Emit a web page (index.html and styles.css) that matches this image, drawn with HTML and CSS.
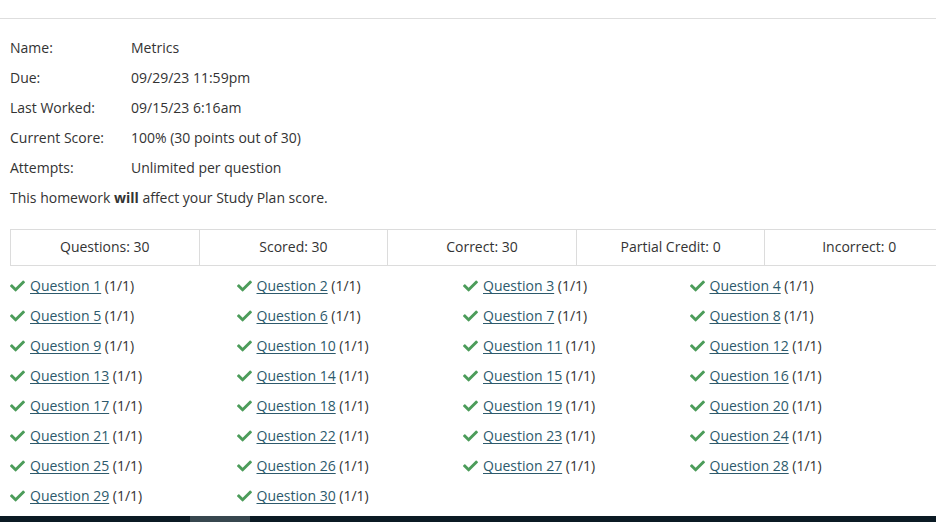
FILE: index.html
```html
<!DOCTYPE html>
<html>
<head>
<meta charset="utf-8">
<link rel="stylesheet" href="styles.css">
</head>
<body>
<div class="topbar"></div>
<main class="content">
  <dl class="info">
    <div class="info-row"><dt>Name:</dt><dd>Metrics</dd></div>
    <div class="info-row"><dt>Due:</dt><dd>09/29/23 11:59pm</dd></div>
    <div class="info-row"><dt>Last Worked:</dt><dd>09/15/23 6:16am</dd></div>
    <div class="info-row"><dt>Current Score:</dt><dd>100% (30 points out of 30)</dd></div>
    <div class="info-row"><dt>Attempts:</dt><dd>Unlimited per question</dd></div>
  </dl>
  <p class="note">This homework <b>will</b> affect your Study Plan score.</p>
  <div class="summary">
    <div class="cell">Questions: 30</div>
    <div class="cell">Scored: 30</div>
    <div class="cell">Correct: 30</div>
    <div class="cell">Partial Credit: 0</div>
    <div class="cell">Incorrect: 0</div>
  </div>
  <ul class="questions" id="questions"></ul>
</main>
<div class="bottombar"><div class="thumb"></div></div>
<script src="script.js"></script>
</body>
</html>
```
FILE: script.js
```js
const list = document.getElementById('questions');
for (let i = 1; i <= 30; i++) {
  const li = document.createElement('li');
  li.className = 'q';
  li.innerHTML = '<svg class="check" viewBox="0 60 512 392" width="15" height="12"><path d="M173.898 439.404l-166.4-166.4c-9.997-9.997-9.997-26.206 0-36.204l36.203-36.204c9.997-9.998 26.207-9.998 36.204 0L192 312.69 432.095 72.596c9.997-9.997 26.207-9.997 36.204 0l36.203 36.204c9.997 9.997 9.997 26.206 0 36.204l-294.4 294.401c-9.998 9.997-26.207 9.997-36.204-.001z" fill="#4c9c5a"/></svg>' +
    '<a href="#">Question ' + i + '</a>&nbsp;<span class="score">(1/1)</span>';
  list.appendChild(li);
}
```
FILE: styles.css
```css
html, body {
  margin: 0;
  padding: 0;
  background: #fff;
  overflow: hidden;
}
body {
  font-family: "Open Sans", "Liberation Sans", sans-serif;
  font-size: 14px;
  color: #333;
  width: 936px;
  height: 522px;
  display: flex;
  flex-direction: column;
}
.topbar {
  height: 18px;
  border-bottom: 1px solid #dedede;
  flex: none;
}
.content {
  padding: 14px 0 0 10px;
  flex: 1;
}
.info {
  margin: 0;
}
.info-row {
  display: flex;
  line-height: 30px;
}
.info-row dt {
  width: 121px;
  margin: 0;
}
.info-row dd {
  margin: 0;
}
.note {
  margin: 0;
  line-height: 30px;
}
.note b {
  font-weight: 700;
}
.summary {
  display: grid;
  grid-template-columns: repeat(5, 188.6px);
  margin-top: 16px;
  border-top: 1px solid #dcdcdc;
  border-bottom: 1px solid #dcdcdc;
  border-left: 1px solid #dcdcdc;
  width: 943px;
}
.cell {
  height: 35px;
  line-height: 34px;
  text-align: center;
  border-right: 1px solid #dcdcdc;
}
.questions {
  list-style: none;
  margin: 5px 0 0;
  padding: 0;
  display: grid;
  grid-template-columns: repeat(4, 226.5px);
}
.q {
  line-height: 30px;
  height: 30px;
  display: flex;
  align-items: center;
  white-space: nowrap;
}
.check {
  margin-right: 5px;
  flex: none;
}
.q a {
  color: #2d5a6c;
  text-decoration: underline;
  text-underline-offset: 2px;
}
.bottombar {
  flex: none;
  height: 6px;
  background: #0b1a24;
  display: flex;
}
.thumb {
  margin-left: 190px;
  width: 60px;
  background: #37474f;
}
```
